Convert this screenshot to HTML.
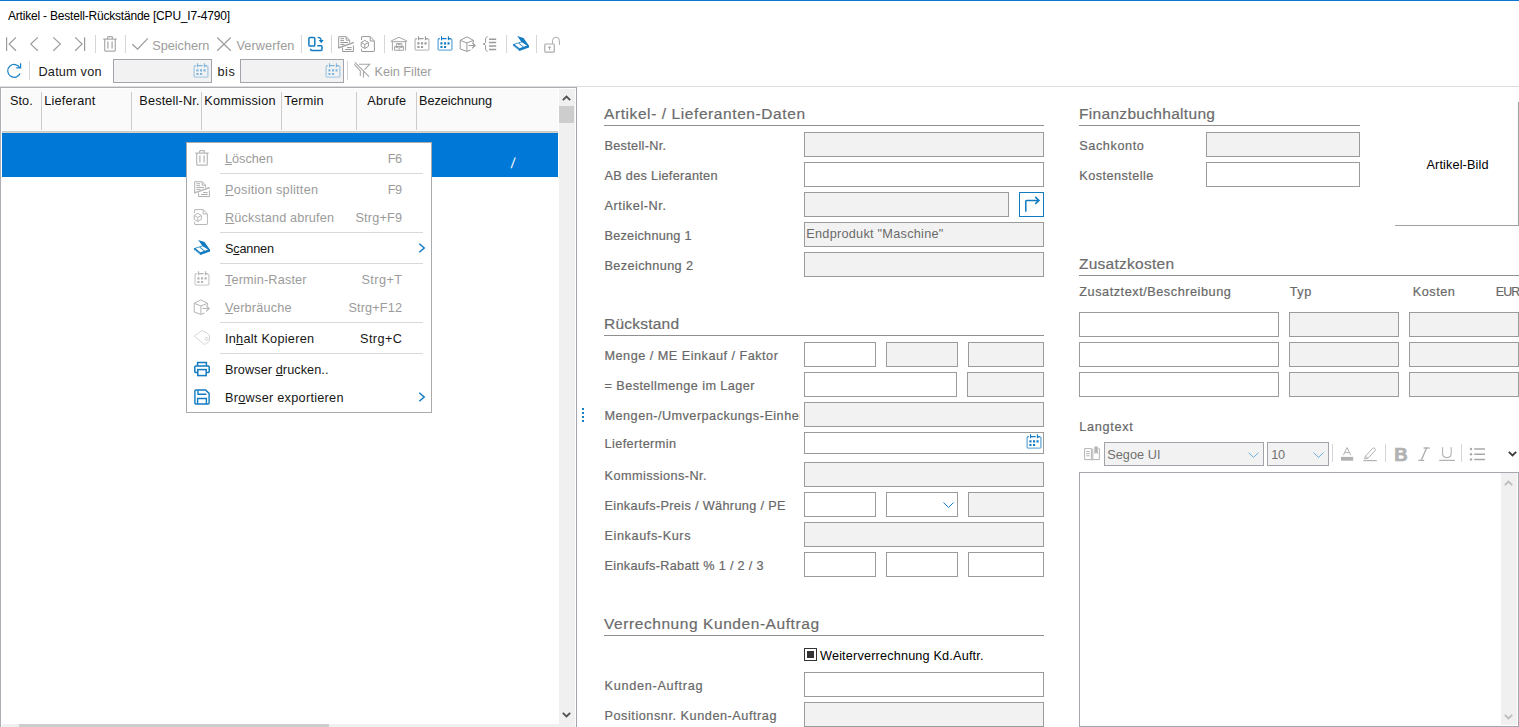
<!DOCTYPE html>
<html lang="de"><head><meta charset="utf-8"><title>Artikel - Bestell-Rückstände</title>
<style>
html,body{margin:0;padding:0;}
body{width:1519px;height:727px;position:relative;overflow:hidden;background:#fff;font-family:"Liberation Sans",sans-serif;}
.b{position:absolute;display:block;}
.t{position:absolute;white-space:nowrap;line-height:1;}
u{text-decoration-thickness:1px;text-underline-offset:1px;}
</style></head><body>
<div class="b" style="left:0px;top:0px;width:1519px;height:1px;background:#0a78d2;"></div>
<svg class="b" style="left:5px;top:36px;overflow:visible" width="16" height="16" viewBox="0 0 16 16"><path fill="none" stroke="#9a9a9a" stroke-width="1.2" d="M1.6 1.2V15M11 1.4L4.2 8.1L11 14.8"/></svg>
<svg class="b" style="left:27px;top:36px;overflow:visible" width="16" height="16" viewBox="0 0 16 16"><path fill="none" stroke="#9a9a9a" stroke-width="1.2" d="M10.8 1.4L3.8 8.1L10.8 14.8"/></svg>
<svg class="b" style="left:49px;top:36px;overflow:visible" width="16" height="16" viewBox="0 0 16 16"><path fill="none" stroke="#9a9a9a" stroke-width="1.2" d="M4.3 1.4L11.3 8.1L4.3 14.8"/></svg>
<svg class="b" style="left:72px;top:36px;overflow:visible" width="16" height="16" viewBox="0 0 16 16"><path fill="none" stroke="#9a9a9a" stroke-width="1.2" d="M12.6 1.2V15M3.2 1.4L10 8.1L3.2 14.8"/></svg>
<div class="b" style="left:95px;top:35px;width:1px;height:18px;background:#d6d6d6;"></div>
<svg class="b" style="left:102px;top:36px;overflow:visible" width="16" height="16" viewBox="0 0 16 16"><path fill="none" stroke="#ababab" stroke-width="1.2" d="M1.2 3.1H14.8M5.6 2.8V1.3Q5.6 0.7 6.2 0.7H9.8Q10.4 0.7 10.4 1.3V2.8M2.7 3.4V14.2Q2.7 15.2 3.7 15.2H12.3Q13.3 15.2 13.3 14.2V3.4"/><path fill="none" stroke="#ababab" stroke-width="1.3" d="M5.9 5.6V12.4M10.1 5.6V12.4"/></svg>
<div class="b" style="left:125px;top:35px;width:1px;height:18px;background:#d6d6d6;"></div>
<svg class="b" style="left:132px;top:36px;overflow:visible" width="16" height="16" viewBox="0 0 16 16"><path fill="none" stroke="#9a9a9a" stroke-width="1.2" d="M0.3 8.2L5.6 13.2L15.8 2.4"/></svg>
<svg class="b" style="left:216px;top:36px;overflow:visible" width="16" height="16" viewBox="0 0 16 16"><path fill="none" stroke="#a2a2a2" stroke-width="1.35" d="M1.2 1.4L14.8 14.8M14.8 1.4L1.2 14.8"/></svg>
<div class="b" style="left:301px;top:35px;width:1px;height:18px;background:#d6d6d6;"></div>
<svg class="b" style="left:308px;top:36px;overflow:visible" width="16" height="16" viewBox="0 0 16 16"><rect x="0.9" y="1.4" width="5.9" height="8.7" rx="1.2" fill="none" stroke="#127bc1" stroke-width="1.5"/><path fill="none" stroke="#127bc1" stroke-width="1.5" d="M9.3 9.7H13Q14 9.7 14 10.7V13.4Q14 14.4 13 14.4H3.6Q2.6 14.4 2.6 13.4V12.7"/><path fill="none" stroke="#127bc1" stroke-width="1.4" d="M9.6 1.4Q13.2 1.4 13.2 5"/><path fill="#127bc1" d="M10.7 4L15.7 4L13.2 7.2Z"/></svg>
<div class="b" style="left:331px;top:35px;width:1px;height:18px;background:#d6d6d6;"></div>
<svg class="b" style="left:338px;top:36px;overflow:visible" width="16" height="16" viewBox="0 0 16 16"><path fill="none" stroke="#9a9a9a" stroke-width="1" d="M0.7 12V0.7H8.2L11.6 4.2V6.6M8.2 0.9V4.2H11.4"/><path fill="none" stroke="#9a9a9a" stroke-width="1" d="M2.4 2.7H6M2.4 4.6H6M2.4 6.5H10M2.4 8.4H6.5"/><path fill="none" stroke="#9a9a9a" stroke-width="1.7" stroke-opacity="0.85" d="M0.2 12L15.8 6.5"/><path fill="none" stroke="#9a9a9a" stroke-width="1" d="M4.6 11.6V15.5H15.4V9.4"/><path fill="none" stroke="#9a9a9a" stroke-width="1" d="M9 11.6H13.7M7 13.5H13.7"/></svg>
<svg class="b" style="left:360px;top:36px;overflow:visible" width="16" height="16" viewBox="0 0 16 16"><path fill="none" stroke="#9a9a9a" stroke-width="1" d="M1.6 4V1Q1.6 0.6 2 0.6H10.2L14.4 5V15Q14.4 15.5 13.9 15.5H2Q1.6 15.5 1.6 15V12.8M10.2 0.8V5H14.2"/><path fill="none" stroke="#9a9a9a" stroke-width="1" d="M4.8 4.4L8.4 6.4V10.4L4.8 12.5L1.2 10.4V6.4ZM1.3 6.5L4.8 8.5L8.3 6.5M4.8 8.5V12.4"/></svg>
<div class="b" style="left:384px;top:35px;width:1px;height:18px;background:#d6d6d6;"></div>
<svg class="b" style="left:391px;top:36px;overflow:visible" width="16" height="16" viewBox="0 0 16 16"><path fill="none" stroke="#a6a6a6" stroke-width="1" d="M0.3 4.8L8 1.3L15.7 4.8V5.7H0.3ZM1.4 5.8V14.6M14.6 5.8V14.6"/><path fill="none" stroke="#a6a6a6" stroke-width="1" d="M5.4 7.6H10.8V10.4H5.4ZM3.6 10.5H12.6V14.3H3.6ZM8.1 10.5V14.3M7 7.6V8.6H9.2V7.6M5 10.6V11.6H6.8V10.6M9.5 10.6V11.6H11.3V10.6"/></svg>
<svg class="b" style="left:414px;top:36px;overflow:visible" width="16" height="16" viewBox="0 0 16 16"><path fill="none" stroke="#9a9a9a" stroke-width="1.4" stroke-opacity="0.6" d="M2.6 2.9H2.1Q1.1 2.9 1.1 3.9V13.1Q1.1 14.1 2.1 14.1H13.9Q14.9 14.1 14.9 13.1V3.9Q14.9 2.9 13.9 2.9H11.4"/><path fill="none" stroke="#9a9a9a" stroke-width="1.1" d="M4.5 0.2V4.3M11.4 0.2V4.3M4.5 2.6H9.6M11.4 2.6H13.8M1.6 2.6H2.6"/><path fill="#9a9a9a" d="M3.4 6.3h2.1v2.1h-2.1zM7 6.3h2.1v2.1h-2.1zM10.5 6.3h2.1v2.1h-2.1zM3.4 10.1h2.1v2h-2.1zM7 10.1h2.1v2h-2.1z"/></svg>
<svg class="b" style="left:437px;top:36px;overflow:visible" width="16" height="16" viewBox="0 0 16 16"><path fill="none" stroke="#127bc1" stroke-width="1.4" stroke-opacity="0.6" d="M2.6 2.9H2.1Q1.1 2.9 1.1 3.9V13.1Q1.1 14.1 2.1 14.1H13.9Q14.9 14.1 14.9 13.1V3.9Q14.9 2.9 13.9 2.9H11.4"/><path fill="none" stroke="#127bc1" stroke-width="1.1" d="M4.5 0.2V4.3M11.4 0.2V4.3M4.5 2.6H9.6M11.4 2.6H13.8M1.6 2.6H2.6"/><path fill="#127bc1" d="M3.4 6.3h2.1v2.1h-2.1zM7 6.3h2.1v2.1h-2.1zM10.5 6.3h2.1v2.1h-2.1zM3.4 10.1h2.1v2h-2.1zM7 10.1h2.1v2h-2.1z"/></svg>
<svg class="b" style="left:459px;top:36px;overflow:visible" width="16" height="16" viewBox="0 0 16 16"><path fill="none" stroke="#9a9a9a" stroke-width="1" d="M14.6 6.6V4.4L7.9 0.9L1.2 4.3V13L7.9 15.4L11.6 14M1.3 4.4L7.9 6.9L14.5 4.4M7.9 6.9V15.3"/><path fill="none" stroke="#9a9a9a" stroke-width="1.15" d="M9.6 9.5H15.8M13.2 6.7L16.1 9.5L13.2 12.3"/></svg>
<svg class="b" style="left:482px;top:36px;overflow:visible" width="16" height="16" viewBox="0 0 16 16"><path fill="none" stroke="#9a9a9a" stroke-width="1" d="M5.6 0.4Q3.6 1.2 3.6 3V6.4Q3.6 7.6 1.2 8Q3.6 8.4 3.6 9.6V13Q3.6 14.8 5.6 15.6"/><path fill="none" stroke="#9a9a9a" stroke-width="1.5" d="M7 3.2H14.2M7 6.6H14.2M7 10H14.2M7 13.4H14.2"/></svg>
<div class="b" style="left:506px;top:35px;width:1px;height:18px;background:#d6d6d6;"></div>
<svg class="b" style="left:513px;top:36px;overflow:visible" width="16" height="16" viewBox="0 0 16 16"><path fill="#127bc1" d="M0 8.2L8.6 5.6L16 9.8V11.5L6.4 15.1L0 10Z"/><path fill="#fff" d="M1.7 8.5L5.2 7.3L9.9 11L6.4 12.2ZM6.2 7L9.4 5.9L14.1 9.6L10.8 10.7Z"/><path fill="none" stroke="#fff" stroke-width="0.55" d="M0.5 9.7L5.9 14M0.5 10.9L5.6 14.9"/><path fill="#127bc1" d="M4.2 0.1L10.5 2.1L16 9.7L16 10.4L8.4 5.9Z"/></svg>
<div class="b" style="left:536px;top:35px;width:1px;height:18px;background:#d6d6d6;"></div>
<svg class="b" style="left:544px;top:37px;overflow:visible" width="16" height="16" viewBox="0 0 16 16"><rect x="0.8" y="7" width="9.5" height="8.1" rx="0.9" fill="none" stroke="#ababab" stroke-width="1.2"/><path fill="none" stroke="#ababab" stroke-width="1" d="M8.5 6.6V3.7A3.45 3.45 0 0 1 15.4 3.7V7.8"/><path fill="none" stroke="#ababab" stroke-width="1" d="M5.5 13V9.4M4.1 10.8L5.5 9.3L6.9 10.8"/></svg>
<svg class="b" style="left:6px;top:63px;overflow:visible" width="16" height="16" viewBox="0 0 16 16"><path fill="none" stroke="#1c83c6" stroke-width="1.25" d="M14.1 10.4A6.45 6.45 0 1 1 13.9 4.9"/><path fill="none" stroke="#1c83c6" stroke-width="1.25" d="M14.6 0.3V4.9H10.2"/></svg>
<div class="b" style="left:29px;top:61px;width:1px;height:19px;background:#d6d6d6;"></div>
<div class="b" style="left:113px;top:59px;width:99px;height:24px;background:#f2f2f2;border:1px solid #a3a3ab;box-sizing:border-box;"></div>
<svg class="b" style="left:193px;top:63px;overflow:visible" width="16" height="16" viewBox="0 0 16 16"><path fill="none" stroke="#7fb6dd" stroke-width="1.4" stroke-opacity="0.6" d="M2.6 2.9H2.1Q1.1 2.9 1.1 3.9V13.1Q1.1 14.1 2.1 14.1H13.9Q14.9 14.1 14.9 13.1V3.9Q14.9 2.9 13.9 2.9H11.4"/><path fill="none" stroke="#7fb6dd" stroke-width="1.1" d="M4.5 0.2V4.3M11.4 0.2V4.3M4.5 2.6H9.6M11.4 2.6H13.8M1.6 2.6H2.6"/><path fill="#7fb6dd" d="M3.4 6.3h2.1v2.1h-2.1zM7 6.3h2.1v2.1h-2.1zM10.5 6.3h2.1v2.1h-2.1zM3.4 10.1h2.1v2h-2.1zM7 10.1h2.1v2h-2.1z"/></svg>
<div class="b" style="left:240px;top:59px;width:104px;height:24px;background:#f2f2f2;border:1px solid #a3a3ab;box-sizing:border-box;"></div>
<svg class="b" style="left:325px;top:63px;overflow:visible" width="16" height="16" viewBox="0 0 16 16"><path fill="none" stroke="#7fb6dd" stroke-width="1.4" stroke-opacity="0.6" d="M2.6 2.9H2.1Q1.1 2.9 1.1 3.9V13.1Q1.1 14.1 2.1 14.1H13.9Q14.9 14.1 14.9 13.1V3.9Q14.9 2.9 13.9 2.9H11.4"/><path fill="none" stroke="#7fb6dd" stroke-width="1.1" d="M4.5 0.2V4.3M11.4 0.2V4.3M4.5 2.6H9.6M11.4 2.6H13.8M1.6 2.6H2.6"/><path fill="#7fb6dd" d="M3.4 6.3h2.1v2.1h-2.1zM7 6.3h2.1v2.1h-2.1zM10.5 6.3h2.1v2.1h-2.1zM3.4 10.1h2.1v2h-2.1zM7 10.1h2.1v2h-2.1z"/></svg>
<div class="b" style="left:347px;top:61px;width:1px;height:19px;background:#d6d6d6;"></div>
<svg class="b" style="left:354px;top:62px;overflow:visible" width="16" height="16" viewBox="0 0 16 16"><path fill="none" stroke="#a6a6a6" stroke-width="1.1" d="M5.2 2.3H15.6L10.6 7.6M0.3 2.4L6.3 8.9V14M9.5 8.7V15.6M0.9 0.3L15.1 14.6"/></svg>
<div class="b" style="left:0px;top:86px;width:1519px;height:1px;background:#dedede;"></div>
<div class="b" style="left:0px;top:87px;width:577px;height:640px;background:#fff;"></div>
<div class="b" style="left:0px;top:87px;width:577px;height:1px;background:#adadb3;"></div>
<div class="b" style="left:0px;top:87px;width:1px;height:640px;background:#adadb3;"></div>
<div class="b" style="left:576px;top:87px;width:1px;height:640px;background:#a4a4ac;"></div>
<div class="b" style="left:2px;top:89px;width:556px;height:41px;background:#fafafa;"></div>
<div class="b" style="left:2px;top:131px;width:556px;height:1px;background:#cccccc;"></div>
<div class="b" style="left:2px;top:132px;width:556px;height:1px;background:#d6d0ca;"></div>
<div class="b" style="left:41px;top:92px;width:1px;height:38px;background:#cbcbcb;"></div>
<div class="b" style="left:131px;top:92px;width:1px;height:38px;background:#cbcbcb;"></div>
<div class="b" style="left:201px;top:92px;width:1px;height:38px;background:#cbcbcb;"></div>
<div class="b" style="left:281px;top:92px;width:1px;height:38px;background:#cbcbcb;"></div>
<div class="b" style="left:356px;top:92px;width:1px;height:38px;background:#cbcbcb;"></div>
<div class="b" style="left:416px;top:92px;width:1px;height:38px;background:#cbcbcb;"></div>
<div class="b" style="left:2px;top:133px;width:556px;height:44px;background:#0078d7;"></div>
<div class="b" style="left:559px;top:89px;width:16px;height:638px;background:#f0f0f0;"></div>
<div class="b" style="left:559px;top:106px;width:15px;height:17px;background:#cdcdcd;"></div>
<svg class="b" style="left:562px;top:95px;overflow:visible" width="9" height="6" viewBox="0 0 9 6"><path fill="none" stroke="#505050" stroke-width="1.8" d="M0.8 5.2L4.5 1.5L8.2 5.2"/></svg>
<svg class="b" style="left:562px;top:712px;overflow:visible" width="9" height="6" viewBox="0 0 9 6"><path fill="none" stroke="#505050" stroke-width="1.8" d="M0.8 0.8L4.5 4.5L8.2 0.8"/></svg>
<div class="b" style="left:2px;top:724px;width:557px;height:3px;background:#f0f0f0;"></div>
<div class="b" style="left:19px;top:724px;width:310px;height:3px;background:#cdcdcd;"></div>
<div class="b" style="left:582px;top:408px;width:2px;height:2px;background:#1a7fc1;"></div>
<div class="b" style="left:582px;top:412px;width:2px;height:2px;background:#1a7fc1;"></div>
<div class="b" style="left:582px;top:416px;width:2px;height:2px;background:#1a7fc1;"></div>
<div class="b" style="left:582px;top:420px;width:2px;height:2px;background:#1a7fc1;"></div>
<div class="b" style="left:186px;top:142px;width:246px;height:271px;background:#fff;border:1px solid #ababab;box-sizing:border-box;"></div>
<svg class="b" style="left:194px;top:150px;overflow:visible" width="16" height="16" viewBox="0 0 16 16"><path fill="none" stroke="#b8b8b8" stroke-width="1.2" d="M1.2 3.1H14.8M5.6 2.8V1.3Q5.6 0.7 6.2 0.7H9.8Q10.4 0.7 10.4 1.3V2.8M2.7 3.4V14.2Q2.7 15.2 3.7 15.2H12.3Q13.3 15.2 13.3 14.2V3.4"/><path fill="none" stroke="#b8b8b8" stroke-width="1.3" d="M5.9 5.6V12.4M10.1 5.6V12.4"/></svg>
<div class="b" style="left:220px;top:173px;width:203px;height:1px;background:#d9d9d9;"></div>
<svg class="b" style="left:194px;top:181px;overflow:visible" width="16" height="16" viewBox="0 0 16 16"><path fill="none" stroke="#b0b0b0" stroke-width="1" d="M0.7 12V0.7H8.2L11.6 4.2V6.6M8.2 0.9V4.2H11.4"/><path fill="none" stroke="#b0b0b0" stroke-width="1" d="M2.4 2.7H6M2.4 4.6H6M2.4 6.5H10M2.4 8.4H6.5"/><path fill="none" stroke="#b0b0b0" stroke-width="1.7" stroke-opacity="0.85" d="M0.2 12L15.8 6.5"/><path fill="none" stroke="#b0b0b0" stroke-width="1" d="M4.6 11.6V15.5H15.4V9.4"/><path fill="none" stroke="#b0b0b0" stroke-width="1" d="M9 11.6H13.7M7 13.5H13.7"/></svg>
<svg class="b" style="left:193px;top:209px;overflow:visible" width="16" height="16" viewBox="0 0 16 16"><path fill="none" stroke="#b8b8b8" stroke-width="1" d="M1.6 4V1Q1.6 0.6 2 0.6H10.2L14.4 5V15Q14.4 15.5 13.9 15.5H2Q1.6 15.5 1.6 15V12.8M10.2 0.8V5H14.2"/><path fill="none" stroke="#b8b8b8" stroke-width="1" d="M4.8 4.4L8.4 6.4V10.4L4.8 12.5L1.2 10.4V6.4ZM1.3 6.5L4.8 8.5L8.3 6.5M4.8 8.5V12.4"/></svg>
<div class="b" style="left:220px;top:232px;width:203px;height:1px;background:#d9d9d9;"></div>
<svg class="b" style="left:194px;top:240px;overflow:visible" width="16" height="16" viewBox="0 0 16 16"><path fill="#127bc1" d="M0 8.2L8.6 5.6L16 9.8V11.5L6.4 15.1L0 10Z"/><path fill="#fff" d="M1.7 8.5L5.2 7.3L9.9 11L6.4 12.2ZM6.2 7L9.4 5.9L14.1 9.6L10.8 10.7Z"/><path fill="none" stroke="#fff" stroke-width="0.55" d="M0.5 9.7L5.9 14M0.5 10.9L5.6 14.9"/><path fill="#127bc1" d="M4.2 0.1L10.5 2.1L16 9.7L16 10.4L8.4 5.9Z"/></svg>
<svg class="b" style="left:418px;top:243px;overflow:visible" width="8" height="10" viewBox="0 0 8 10"><path fill="none" stroke="#127bc1" stroke-width="1.5" d="M1.3 0.7L6.2 5L1.3 9.3"/></svg>
<div class="b" style="left:220px;top:263px;width:203px;height:1px;background:#d9d9d9;"></div>
<svg class="b" style="left:194px;top:271px;overflow:visible" width="16" height="16" viewBox="0 0 16 16"><path fill="none" stroke="#b4b4b4" stroke-width="1.4" stroke-opacity="0.6" d="M2.6 2.9H2.1Q1.1 2.9 1.1 3.9V13.1Q1.1 14.1 2.1 14.1H13.9Q14.9 14.1 14.9 13.1V3.9Q14.9 2.9 13.9 2.9H11.4"/><path fill="none" stroke="#b4b4b4" stroke-width="1.1" d="M4.5 0.2V4.3M11.4 0.2V4.3M4.5 2.6H9.6M11.4 2.6H13.8M1.6 2.6H2.6"/><path fill="#b4b4b4" d="M3.4 6.3h2.1v2.1h-2.1zM7 6.3h2.1v2.1h-2.1zM10.5 6.3h2.1v2.1h-2.1zM3.4 10.1h2.1v2h-2.1zM7 10.1h2.1v2h-2.1z"/></svg>
<svg class="b" style="left:193.3px;top:299px;overflow:visible" width="16" height="16" viewBox="0 0 16 16"><path fill="none" stroke="#b4b4b4" stroke-width="1" d="M14.6 6.6V4.4L7.9 0.9L1.2 4.3V13L7.9 15.4L11.6 14M1.3 4.4L7.9 6.9L14.5 4.4M7.9 6.9V15.3"/><path fill="none" stroke="#b4b4b4" stroke-width="1.15" d="M9.6 9.5H15.8M13.2 6.7L16.1 9.5L13.2 12.3"/></svg>
<div class="b" style="left:220px;top:322px;width:203px;height:1px;background:#d9d9d9;"></div>
<svg class="b" style="left:194px;top:330px;overflow:visible" width="16" height="16" viewBox="0 0 16 16"><path fill="none" stroke="#d0d0d0" stroke-width="0.9" d="M0.3 6.2L7.8 0.5L13.2 3.2Q15.4 4.4 15.5 7L15.5 10Q15.5 11.4 14.2 12.2L11.4 14Q10.4 14.6 9.4 13.8Z"/><circle cx="12.6" cy="8.8" r="1.5" fill="none" stroke="#d0d0d0" stroke-width="0.9"/></svg>
<div class="b" style="left:220px;top:353px;width:203px;height:1px;background:#d9d9d9;"></div>
<svg class="b" style="left:194px;top:361px;overflow:visible" width="16" height="16" viewBox="0 0 16 16"><path fill="none" stroke="#127bc1" stroke-width="1.5" d="M3.6 4.4V1.6H12.4V4.4M3.4 11.4H1.8Q0.8 11.4 0.8 10.4V6Q0.8 5 1.8 5H14.2Q15.2 5 15.2 6V10.4Q15.2 11.4 14.2 11.4H12.6"/><rect x="3.8" y="8.6" width="8.4" height="6" fill="none" stroke="#127bc1" stroke-width="1.5"/></svg>
<svg class="b" style="left:194px;top:389px;overflow:visible" width="16" height="16" viewBox="0 0 16 16"><path fill="none" stroke="#127bc1" stroke-width="1.4" d="M0.9 2Q0.9 1 1.9 1H11.6L15.1 4.4V14Q15.1 15 14.1 15H1.9Q0.9 15 0.9 14Z"/><path fill="none" stroke="#127bc1" stroke-width="1.4" d="M4 1.2V5.2H12.4M3.6 14.8V9.5H12.4V14.8"/></svg>
<svg class="b" style="left:418px;top:392px;overflow:visible" width="8" height="10" viewBox="0 0 8 10"><path fill="none" stroke="#127bc1" stroke-width="1.5" d="M1.3 0.7L6.2 5L1.3 9.3"/></svg>
<div class="b" style="left:604px;top:125px;width:440px;height:1px;background:#8f8f8f;"></div>
<div class="b" style="left:804px;top:132px;width:240px;height:25px;background:#f2f2f2;border:1px solid #9b9b9b;box-sizing:border-box;"></div>
<div class="b" style="left:804px;top:162px;width:240px;height:25px;background:#fff;border:1px solid #9b9b9b;box-sizing:border-box;"></div>
<div class="b" style="left:804px;top:192px;width:205px;height:25px;background:#f2f2f2;border:1px solid #9b9b9b;box-sizing:border-box;"></div>
<div class="b" style="left:1019px;top:192px;width:25px;height:25px;background:#fff;border:1px solid #117abf;box-sizing:border-box;"></div>
<svg class="b" style="left:1023px;top:196px;overflow:visible" width="16" height="16" viewBox="0 0 16 16"><path fill="none" stroke="#117abf" stroke-width="1.5" d="M2.8 15.7V5.2Q2.8 4.4 3.6 4.4H15.8M12.2 0.9L16 4.4L12.2 7.9"/></svg>
<div class="b" style="left:804px;top:222px;width:240px;height:25px;background:#f2f2f2;border:1px solid #9b9b9b;box-sizing:border-box;"></div>
<div class="b" style="left:804px;top:252px;width:240px;height:25px;background:#f2f2f2;border:1px solid #9b9b9b;box-sizing:border-box;"></div>
<div class="b" style="left:604px;top:335px;width:440px;height:1px;background:#8f8f8f;"></div>
<div class="b" style="left:804px;top:342px;width:72px;height:25px;background:#fff;border:1px solid #9b9b9b;box-sizing:border-box;"></div>
<div class="b" style="left:886px;top:342px;width:72px;height:25px;background:#f2f2f2;border:1px solid #9b9b9b;box-sizing:border-box;"></div>
<div class="b" style="left:968px;top:342px;width:76px;height:25px;background:#f2f2f2;border:1px solid #9b9b9b;box-sizing:border-box;"></div>
<div class="b" style="left:804px;top:372px;width:153px;height:25px;background:#fff;border:1px solid #9b9b9b;box-sizing:border-box;"></div>
<div class="b" style="left:967px;top:372px;width:77px;height:25px;background:#f2f2f2;border:1px solid #9b9b9b;box-sizing:border-box;"></div>
<div class="b" style="left:804px;top:402px;width:240px;height:25px;background:#f2f2f2;border:1px solid #9b9b9b;box-sizing:border-box;"></div>
<div class="b" style="left:804px;top:432px;width:240px;height:22px;background:#fff;border:1px solid #9b9b9b;box-sizing:border-box;"></div>
<svg class="b" style="left:1026px;top:434px;overflow:visible" width="16" height="16" viewBox="0 0 16 16"><path fill="none" stroke="#127bc1" stroke-width="1.4" stroke-opacity="0.6" d="M2.6 2.9H2.1Q1.1 2.9 1.1 3.9V13.1Q1.1 14.1 2.1 14.1H13.9Q14.9 14.1 14.9 13.1V3.9Q14.9 2.9 13.9 2.9H11.4"/><path fill="none" stroke="#127bc1" stroke-width="1.1" d="M4.5 0.2V4.3M11.4 0.2V4.3M4.5 2.6H9.6M11.4 2.6H13.8M1.6 2.6H2.6"/><path fill="#127bc1" d="M3.4 6.3h2.1v2.1h-2.1zM7 6.3h2.1v2.1h-2.1zM10.5 6.3h2.1v2.1h-2.1zM3.4 10.1h2.1v2h-2.1zM7 10.1h2.1v2h-2.1z"/></svg>
<div class="b" style="left:804px;top:462px;width:240px;height:25px;background:#f2f2f2;border:1px solid #9b9b9b;box-sizing:border-box;"></div>
<div class="b" style="left:804px;top:492px;width:72px;height:25px;background:#fff;border:1px solid #9b9b9b;box-sizing:border-box;"></div>
<div class="b" style="left:886px;top:492px;width:72px;height:25px;background:#fff;border:1px solid #9b9b9b;box-sizing:border-box;"></div>
<svg class="b" style="left:942.5px;top:501.7px;overflow:visible" width="12" height="7" viewBox="0 0 12 7"><path fill="none" stroke="#127bc1" stroke-width="1" d="M0.5 0.6L5.5 5.4L10.5 0.6"/></svg>
<div class="b" style="left:968px;top:492px;width:76px;height:25px;background:#f2f2f2;border:1px solid #9b9b9b;box-sizing:border-box;"></div>
<div class="b" style="left:804px;top:522px;width:240px;height:25px;background:#f2f2f2;border:1px solid #9b9b9b;box-sizing:border-box;"></div>
<div class="b" style="left:804px;top:552px;width:72px;height:25px;background:#fff;border:1px solid #9b9b9b;box-sizing:border-box;"></div>
<div class="b" style="left:886px;top:552px;width:72px;height:25px;background:#fff;border:1px solid #9b9b9b;box-sizing:border-box;"></div>
<div class="b" style="left:968px;top:552px;width:76px;height:25px;background:#fff;border:1px solid #9b9b9b;box-sizing:border-box;"></div>
<div class="b" style="left:604px;top:635px;width:440px;height:1px;background:#8f8f8f;"></div>
<div class="b" style="left:804px;top:648px;width:13px;height:13px;background:#fff;border:1px solid #333;box-sizing:border-box;"></div>
<div class="b" style="left:807px;top:651px;width:7px;height:7px;background:#333;"></div>
<div class="b" style="left:804px;top:672px;width:240px;height:25px;background:#fff;border:1px solid #9b9b9b;box-sizing:border-box;"></div>
<div class="b" style="left:804px;top:702px;width:240px;height:25px;background:#f2f2f2;border:1px solid #9b9b9b;box-sizing:border-box;"></div>
<div class="b" style="left:1079px;top:125px;width:281px;height:1px;background:#8f8f8f;"></div>
<div class="b" style="left:1206px;top:132px;width:154px;height:25px;background:#f2f2f2;border:1px solid #9b9b9b;box-sizing:border-box;"></div>
<div class="b" style="left:1206px;top:162px;width:154px;height:25px;background:#fff;border:1px solid #9b9b9b;box-sizing:border-box;"></div>
<div class="b" style="left:1395px;top:225px;width:124px;height:1px;background:#a0a0a0;"></div>
<div class="b" style="left:1518px;top:102px;width:1px;height:124px;background:#a0a0a0;"></div>
<div class="b" style="left:1079px;top:275px;width:441px;height:1px;background:#8f8f8f;"></div>
<div class="b" style="left:1079px;top:312px;width:200px;height:25px;background:#fff;border:1px solid #9b9b9b;box-sizing:border-box;"></div>
<div class="b" style="left:1289px;top:312px;width:110px;height:25px;background:#f2f2f2;border:1px solid #9b9b9b;box-sizing:border-box;"></div>
<div class="b" style="left:1409px;top:312px;width:110px;height:25px;background:#f2f2f2;border:1px solid #9b9b9b;box-sizing:border-box;"></div>
<div class="b" style="left:1079px;top:342px;width:200px;height:25px;background:#fff;border:1px solid #9b9b9b;box-sizing:border-box;"></div>
<div class="b" style="left:1289px;top:342px;width:110px;height:25px;background:#f2f2f2;border:1px solid #9b9b9b;box-sizing:border-box;"></div>
<div class="b" style="left:1409px;top:342px;width:110px;height:25px;background:#f2f2f2;border:1px solid #9b9b9b;box-sizing:border-box;"></div>
<div class="b" style="left:1079px;top:372px;width:200px;height:25px;background:#fff;border:1px solid #9b9b9b;box-sizing:border-box;"></div>
<div class="b" style="left:1289px;top:372px;width:110px;height:25px;background:#f2f2f2;border:1px solid #9b9b9b;box-sizing:border-box;"></div>
<div class="b" style="left:1409px;top:372px;width:110px;height:25px;background:#f2f2f2;border:1px solid #9b9b9b;box-sizing:border-box;"></div>
<svg class="b" style="left:1084px;top:446px;overflow:visible" width="16" height="16" viewBox="0 0 16 16"><path fill="none" stroke="#b4b4b4" stroke-width="1" d="M0.6 2.6H7.4V13.6H0.6ZM8.8 2.6V13.6H15.4V2.6H14.4M7.4 13.8Q8 15 8.8 13.8"/><path fill="none" stroke="#b4b4b4" stroke-width="1" d="M2.2 5.4H5.8M2.2 7.6H5.8M2.2 9.8H5.8"/><path fill="#b4b4b4" d="M10.4 0.6H13.8V8.2L12.1 6.8L10.4 8.2Z"/></svg>
<div class="b" style="left:1104px;top:442px;width:160px;height:24px;background:#f2f2f2;border:1px solid #a3a3ab;box-sizing:border-box;"></div>
<svg class="b" style="left:1247.5px;top:452px;overflow:visible" width="11" height="6" viewBox="0 0 11 6"><path fill="none" stroke="#6cb2de" stroke-width="1" d="M0.5 0.6L5.5 5.4L10.5 0.6"/></svg>
<div class="b" style="left:1267px;top:442px;width:62px;height:24px;background:#f2f2f2;border:1px solid #a3a3ab;box-sizing:border-box;"></div>
<svg class="b" style="left:1312.5px;top:452px;overflow:visible" width="11" height="6" viewBox="0 0 11 6"><path fill="none" stroke="#6cb2de" stroke-width="1" d="M0.5 0.6L5.5 5.4L10.5 0.6"/></svg>
<div class="b" style="left:1332px;top:444px;width:1px;height:18px;background:#d6d6d6;"></div>
<svg class="b" style="left:1340px;top:446px;overflow:visible" width="16" height="16" viewBox="0 0 16 16"><path fill="none" stroke="#b2b2b2" stroke-width="1" d="M3.4 9.2L7.1 1.6L10.8 9.2M4.8 6.6H9.4"/><rect x="1" y="10.9" width="12.2" height="3.8" fill="#b2b2b2"/></svg>
<svg class="b" style="left:1362px;top:446px;overflow:visible" width="16" height="16" viewBox="0 0 16 16"><path fill="none" stroke="#b2b2b2" stroke-width="1" d="M3.6 10L10.6 2.4Q11.6 1.4 12.8 2.4Q14 3.6 13 4.8L6 12.2L2.4 12.8ZM3.4 10L6 12.4"/><path fill="none" stroke="#b2b2b2" stroke-width="1.2" d="M1.4 14.6H14.8"/></svg>
<div class="b" style="left:1385px;top:444px;width:1px;height:18px;background:#d6d6d6;"></div>
<svg class="b" style="left:1393px;top:446px;overflow:visible" width="16" height="16" viewBox="0 0 16 16"><text x="1.2" y="14.6" font-family="Liberation Sans, sans-serif" font-weight="bold" font-size="18.5" fill="#b2b2b2" stroke="#b2b2b2" stroke-width="0.7">B</text></svg>
<svg class="b" style="left:1416px;top:446px;overflow:visible" width="16" height="16" viewBox="0 0 16 16"><path fill="none" stroke="#b2b2b2" stroke-width="1.4" d="M7.6 2H13.6M2.2 14.4H8.2M10.6 2L5.2 14.4"/></svg>
<svg class="b" style="left:1439px;top:446px;overflow:visible" width="16" height="16" viewBox="0 0 16 16"><path fill="none" stroke="#b2b2b2" stroke-width="1.1" d="M3.6 1.2V7.6Q3.6 11.6 7.9 11.6Q12.2 11.6 12.2 7.6V1.2M0.2 14.4H15.8"/></svg>
<div class="b" style="left:1461px;top:444px;width:1px;height:18px;background:#d6d6d6;"></div>
<svg class="b" style="left:1469px;top:446px;overflow:visible" width="16" height="16" viewBox="0 0 16 16"><path fill="none" stroke="#a8a8a8" stroke-width="1.5" d="M5.2 3H16M5.2 8.2H16M5.2 13.4H16"/><circle cx="2" cy="3" r="1.2" fill="#a8a8a8"/><circle cx="2" cy="8.2" r="1.2" fill="#a8a8a8"/><circle cx="2" cy="13.4" r="1.2" fill="#a8a8a8"/></svg>
<svg class="b" style="left:1508px;top:451px;overflow:visible" width="9" height="6" viewBox="0 0 9 6"><path fill="none" stroke="#3c3c3c" stroke-width="1.8" d="M0.8 0.8L4.5 4.5L8.2 0.8"/></svg>
<div class="b" style="left:1079px;top:472px;width:440px;height:255px;background:#fff;border:1px solid #a6a6ae;box-sizing:border-box;"></div>
<div class="b" style="left:1501px;top:473px;width:16px;height:252px;background:#f0f0f0;"></div>
<svg class="b" style="left:1504px;top:480px;overflow:visible" width="9" height="6" viewBox="0 0 9 6"><path fill="none" stroke="#bdbdbd" stroke-width="1.8" d="M0.8 5.2L4.5 1.5L8.2 5.2"/></svg>
<svg class="b" style="left:1504px;top:714px;overflow:visible" width="9" height="6" viewBox="0 0 9 6"><path fill="none" stroke="#bdbdbd" stroke-width="1.8" d="M0.8 0.8L4.5 4.5L8.2 0.8"/></svg>
<span class="t" style="top:9.74px;font-size:12px;color:#000;left:8.00px;letter-spacing:-0.198px;">Artikel - Bestell-Rückstände [CPU_I7-4790]</span>
<span class="t" style="top:40.15px;font-size:12.7px;color:#9c9c9c;left:152.30px;letter-spacing:-0.018px;">Speichern</span>
<span class="t" style="top:40.15px;font-size:12.7px;color:#9c9c9c;left:236.40px;letter-spacing:0.109px;">Verwerfen</span>
<span class="t" style="top:66.15px;font-size:12.7px;color:#1a1a1a;left:38.50px;letter-spacing:0.205px;">Datum von</span>
<span class="t" style="top:66.15px;font-size:12.7px;color:#1a1a1a;left:217.40px;letter-spacing:0.591px;">bis</span>
<span class="t" style="top:66.15px;font-size:12.7px;color:#9c9c9c;left:374.50px;letter-spacing:-0.013px;">Kein Filter</span>
<span class="t" style="top:95.15px;font-size:12.7px;color:#111;left:10.10px;letter-spacing:0.007px;">Sto.</span>
<span class="t" style="top:95.15px;font-size:12.7px;color:#111;left:44.20px;letter-spacing:0.203px;">Lieferant</span>
<span class="t" style="top:95.15px;font-size:12.7px;color:#111;left:139.30px;letter-spacing:0.167px;">Bestell-Nr.</span>
<span class="t" style="top:95.15px;font-size:12.7px;color:#111;left:204.20px;letter-spacing:0.245px;">Kommission</span>
<span class="t" style="top:95.15px;font-size:12.7px;color:#111;left:284.30px;letter-spacing:0.244px;">Termin</span>
<span class="t" style="top:95.15px;font-size:12.7px;color:#111;left:367.20px;letter-spacing:0.322px;">Abrufe</span>
<span class="t" style="top:95.15px;font-size:12.7px;color:#111;left:419.00px;letter-spacing:-0.037px;">Bezeichnung</span>
<span class="t" style="top:156.23px;font-size:14.5px;color:#fff;left:511.20px;transform:skewX(-6deg);">/</span>
<span class="t" style="top:153.15px;font-size:12.7px;color:#9b9b9b;left:225.00px;letter-spacing:0.003px;"><u>L</u>öschen</span>
<span class="t" style="top:153.15px;font-size:12.7px;color:#9b9b9b;right:1117.00px;letter-spacing:-0.512px;margin-right:0.512px;">F6</span>
<span class="t" style="top:184.15px;font-size:12.7px;color:#9b9b9b;left:225.00px;letter-spacing:0.258px;"><u>P</u>osition splitten</span>
<span class="t" style="top:184.15px;font-size:12.7px;color:#9b9b9b;right:1117.00px;letter-spacing:-0.512px;margin-right:0.512px;">F9</span>
<span class="t" style="top:212.15px;font-size:12.7px;color:#9b9b9b;left:225.00px;letter-spacing:0.155px;"><u>R</u>ückstand abrufen</span>
<span class="t" style="top:212.15px;font-size:12.7px;color:#9b9b9b;right:1117.00px;letter-spacing:0.169px;margin-right:-0.169px;">Strg+F9</span>
<span class="t" style="top:243.15px;font-size:12.7px;color:#161616;left:225.00px;letter-spacing:-0.182px;">S<u>c</u>annen</span>
<span class="t" style="top:274.15px;font-size:12.7px;color:#9b9b9b;left:225.00px;letter-spacing:0.152px;"><u>T</u>ermin-Raster</span>
<span class="t" style="top:274.15px;font-size:12.7px;color:#9b9b9b;right:1117.00px;letter-spacing:0.412px;margin-right:-0.412px;">Strg+T</span>
<span class="t" style="top:302.15px;font-size:12.7px;color:#9b9b9b;left:225.00px;letter-spacing:0.177px;"><u>V</u>erbräuche</span>
<span class="t" style="top:302.15px;font-size:12.7px;color:#9b9b9b;right:1117.00px;letter-spacing:0.136px;margin-right:-0.136px;">Strg+F12</span>
<span class="t" style="top:333.15px;font-size:12.7px;color:#161616;left:225.00px;letter-spacing:0.259px;">In<u>h</u>alt Kopieren</span>
<span class="t" style="top:333.15px;font-size:12.7px;color:#161616;right:1117.00px;letter-spacing:0.431px;margin-right:-0.431px;">Strg+C</span>
<span class="t" style="top:364.15px;font-size:12.7px;color:#161616;left:225.00px;letter-spacing:0.077px;">Browser <u>d</u>rucken..</span>
<span class="t" style="top:392.15px;font-size:12.7px;color:#161616;left:225.00px;letter-spacing:0.275px;">Br<u>o</u>wser exportieren</span>
<span class="t" style="top:105.78px;font-size:15.5px;color:#6b6b6b;left:604.00px;letter-spacing:0.584px;-webkit-text-stroke:0.2px #6b6b6b;">Artikel- / Lieferanten-Daten</span>
<span class="t" style="top:140.15px;font-size:12.7px;color:#686868;left:604.50px;letter-spacing:0.297px;-webkit-text-stroke:0.2px #686868;">Bestell-Nr.</span>
<span class="t" style="top:170.15px;font-size:12.7px;color:#686868;left:604.50px;letter-spacing:0.299px;-webkit-text-stroke:0.2px #686868;">AB des Lieferanten</span>
<span class="t" style="top:200.15px;font-size:12.7px;color:#686868;left:604.50px;letter-spacing:0.581px;-webkit-text-stroke:0.2px #686868;">Artikel-Nr.</span>
<span class="t" style="top:230.15px;font-size:12.7px;color:#686868;left:604.50px;letter-spacing:0.254px;-webkit-text-stroke:0.2px #686868;">Bezeichnung 1</span>
<span class="t" style="top:227.75px;font-size:12.7px;color:#6a6a6a;left:806.30px;letter-spacing:0.263px;">Endprodukt "Maschine"</span>
<span class="t" style="top:260.15px;font-size:12.7px;color:#686868;left:604.50px;letter-spacing:0.379px;-webkit-text-stroke:0.2px #686868;">Bezeichnung 2</span>
<span class="t" style="top:315.78px;font-size:15.5px;color:#6b6b6b;left:604.00px;letter-spacing:0.221px;-webkit-text-stroke:0.2px #6b6b6b;">Rückstand</span>
<span class="t" style="top:350.15px;font-size:12.7px;color:#686868;left:604.50px;letter-spacing:0.485px;-webkit-text-stroke:0.2px #686868;">Menge / ME Einkauf / Faktor</span>
<span class="t" style="top:380.15px;font-size:12.7px;color:#686868;left:604.50px;letter-spacing:0.423px;-webkit-text-stroke:0.2px #686868;">= Bestellmenge im Lager</span>
<span class="t" style="top:410.15px;font-size:12.7px;color:#686868;left:604.50px;letter-spacing:0.472px;width:195.5px;overflow:hidden;-webkit-text-stroke:0.2px #686868;">Mengen-/Umverpackungs-Einheit</span>
<span class="t" style="top:438.15px;font-size:12.7px;color:#686868;left:604.50px;letter-spacing:0.409px;-webkit-text-stroke:0.2px #686868;">Liefertermin</span>
<span class="t" style="top:470.15px;font-size:12.7px;color:#686868;left:604.50px;letter-spacing:0.438px;-webkit-text-stroke:0.2px #686868;">Kommissions-Nr.</span>
<span class="t" style="top:500.15px;font-size:12.7px;color:#686868;left:604.50px;letter-spacing:0.344px;-webkit-text-stroke:0.2px #686868;">Einkaufs-Preis / Währung / PE</span>
<span class="t" style="top:530.15px;font-size:12.7px;color:#686868;left:604.50px;letter-spacing:0.585px;-webkit-text-stroke:0.2px #686868;">Einkaufs-Kurs</span>
<span class="t" style="top:560.15px;font-size:12.7px;color:#686868;left:604.50px;letter-spacing:0.311px;-webkit-text-stroke:0.2px #686868;">Einkaufs-Rabatt % 1 / 2 / 3</span>
<span class="t" style="top:615.78px;font-size:15.5px;color:#6b6b6b;left:604.00px;letter-spacing:0.569px;-webkit-text-stroke:0.2px #6b6b6b;">Verrechnung Kunden-Auftrag</span>
<span class="t" style="top:649.75px;font-size:12.7px;color:#000;left:820.00px;letter-spacing:0.167px;">Weiterverrechnung Kd.Auftr.</span>
<span class="t" style="top:680.15px;font-size:12.7px;color:#686868;left:604.50px;letter-spacing:0.702px;-webkit-text-stroke:0.2px #686868;">Kunden-Auftrag</span>
<span class="t" style="top:710.15px;font-size:12.7px;color:#686868;left:604.50px;letter-spacing:0.538px;-webkit-text-stroke:0.2px #686868;">Positionsnr. Kunden-Auftrag</span>
<span class="t" style="top:105.78px;font-size:15.5px;color:#6b6b6b;left:1079.00px;letter-spacing:0.312px;-webkit-text-stroke:0.2px #6b6b6b;">Finanzbuchhaltung</span>
<span class="t" style="top:140.15px;font-size:12.7px;color:#686868;left:1079.30px;letter-spacing:0.566px;-webkit-text-stroke:0.2px #686868;">Sachkonto</span>
<span class="t" style="top:170.15px;font-size:12.7px;color:#686868;left:1079.30px;letter-spacing:0.443px;-webkit-text-stroke:0.2px #686868;">Kostenstelle</span>
<span class="t" style="top:159.15px;font-size:12.7px;color:#000;left:1426.50px;letter-spacing:0.124px;">Artikel-Bild</span>
<span class="t" style="top:255.78px;font-size:15.5px;color:#6b6b6b;left:1079.00px;letter-spacing:0.256px;-webkit-text-stroke:0.2px #6b6b6b;">Zusatzkosten</span>
<span class="t" style="top:286.15px;font-size:12.7px;color:#686868;left:1079.30px;letter-spacing:0.539px;-webkit-text-stroke:0.2px #686868;">Zusatztext/Beschreibung</span>
<span class="t" style="top:286.15px;font-size:12.7px;color:#686868;left:1289.70px;letter-spacing:0.523px;-webkit-text-stroke:0.2px #686868;">Typ</span>
<span class="t" style="top:286.15px;font-size:12.7px;color:#686868;left:1412.80px;letter-spacing:0.500px;-webkit-text-stroke:0.2px #686868;">Kosten</span>
<span class="t" style="top:285.60px;font-size:12.4px;color:#686868;left:1495.80px;letter-spacing:-0.836px;-webkit-text-stroke:0.2px #686868;">EUR</span>
<span class="t" style="top:421.15px;font-size:12.7px;color:#686868;left:1079.30px;letter-spacing:0.688px;-webkit-text-stroke:0.2px #686868;">Langtext</span>
<span class="t" style="top:449.15px;font-size:12.7px;color:#707070;left:1107.20px;letter-spacing:0.071px;">Segoe UI</span>
<span class="t" style="top:449.15px;font-size:12.7px;color:#707070;left:1271.20px;letter-spacing:-0.325px;">10</span>
</body></html>
